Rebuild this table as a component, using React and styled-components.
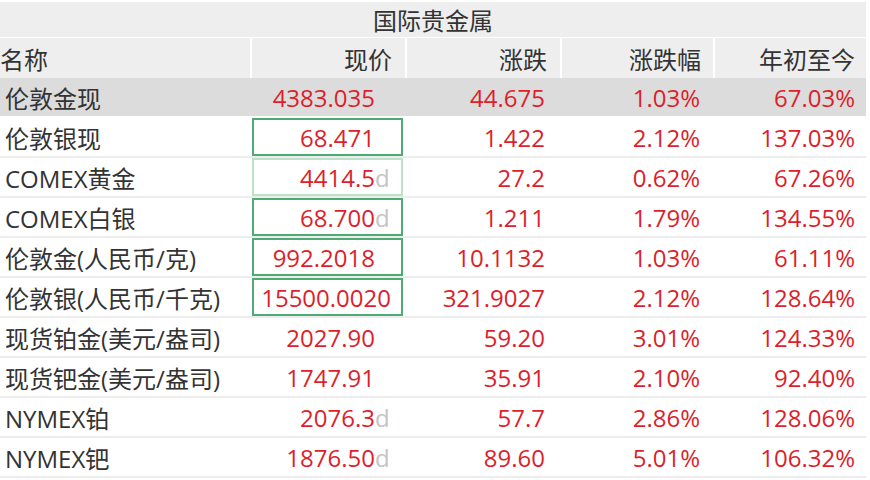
import React from "react";
import styled, { createGlobalStyle } from "styled-components";

const GlobalStyle = createGlobalStyle`
  html, body {
    margin: 0;
    padding: 0;
    background: #ffffff;
  }
  body {
    font-family: "Open Sans", "Noto Sans CJK SC", sans-serif;
  }
`;

const rows = [
  { name: "伦敦金现", price: "4383.035", chg: "44.675", pct: "1.03%", ytd: "67.03%", active: true },
  { name: "伦敦银现", price: "68.471", chg: "1.422", pct: "2.12%", ytd: "137.03%", box: "strong" },
  { name: "COMEX黄金", price: "4414.5", d: true, chg: "27.2", pct: "0.62%", ytd: "67.26%", box: "faint" },
  { name: "COMEX白银", price: "68.700", d: true, chg: "1.211", pct: "1.79%", ytd: "134.55%", box: "strong" },
  { name: "伦敦金(人民币/克)", price: "992.2018", chg: "10.1132", pct: "1.03%", ytd: "61.11%", box: "strong" },
  { name: "伦敦银(人民币/千克)", price: "15500.0020", chg: "321.9027", pct: "2.12%", ytd: "128.64%", box: "strong", wide: true },
  { name: "现货铂金(美元/盎司)", price: "2027.90", chg: "59.20", pct: "3.01%", ytd: "124.33%" },
  { name: "现货钯金(美元/盎司)", price: "1747.91", chg: "35.91", pct: "2.10%", ytd: "92.40%" },
  { name: "NYMEX铂", price: "2076.3", d: true, chg: "57.7", pct: "2.86%", ytd: "128.06%" },
  { name: "NYMEX钯", price: "1876.50", d: true, chg: "89.60", pct: "5.01%", ytd: "106.32%" },
];

const boxColors = {
  strong: "#4dab73",
  faint: "#bfe0cb",
};

const Table = styled.div`
  width: 866px;
  padding-top: 2px;
  font-size: 24px;
  color: #333333;
`;

const TitleBar = styled.div`
  height: 35px;
  background: #eeeeee;
  border-bottom: 1px solid #ffffff;
  display: flex;
  align-items: center;
  justify-content: center;
`;

const columns = "250px 155px 155px 153px 153px";

const HeaderRow = styled.div`
  display: grid;
  grid-template-columns: ${columns};
  height: 40px;
  background: #eeeeee;
`;

const HeadCell = styled.div`
  display: flex;
  align-items: center;
  justify-content: ${(p) => (p.$left ? "flex-start" : "flex-end")};
  padding-right: ${(p) => (p.$left ? "0" : `${p.$pr}px`)};
  border-left: ${(p) => (p.$left ? "none" : "2px solid #ffffff")};
`;

const Row = styled.div`
  display: grid;
  grid-template-columns: ${columns};
  height: 38px;
  background: ${(p) => (p.$active ? "#dcdcdc" : "#ffffff")};
  border-bottom: 2px solid ${(p) => (p.$active ? "#ffffff" : "#ececec")};
`;

const NameCell = styled.div`
  display: flex;
  align-items: center;
  padding-left: 5px;
  white-space: nowrap;
  color: #333333;
`;

const NumCell = styled.div`
  display: flex;
  align-items: center;
  justify-content: flex-end;
  padding-right: ${(p) => p.$pr}px;
  color: #dc1f2b;
  white-space: nowrap;
`;

const PriceCell = styled.div`
  padding: 0 2px;
  display: flex;
`;

const PriceBox = styled.div`
  flex: 1;
  box-sizing: border-box;
  border: 2px solid ${(p) => boxColors[p.$box] || "transparent"};
  display: flex;
  align-items: center;
  justify-content: flex-end;
  padding-right: ${(p) => (p.$wide ? "10px" : "9px")};
  color: #dc1f2b;
  white-space: nowrap;
`;

const DelaySlot = styled.span`
  display: inline-block;
  width: 17px;
  color: #c4c4c4;
  text-align: left;
`;

export default function App() {
  return (
    <>
      <GlobalStyle />
      <Table>
        <TitleBar>国际贵金属</TitleBar>
        <HeaderRow>
          <HeadCell $left>名称</HeadCell>
          <HeadCell $pr={13}>现价</HeadCell>
          <HeadCell $pr={13}>涨跌</HeadCell>
          <HeadCell $pr={12}>涨跌幅</HeadCell>
          <HeadCell $pr={11}>年初至今</HeadCell>
        </HeaderRow>
        {rows.map((r) => (
          <Row key={r.name} $active={r.active}>
            <NameCell>{r.name}</NameCell>
            <PriceCell>
              <PriceBox $box={r.box} $wide={r.wide}>
                {r.price}
                {!r.wide && <DelaySlot>{r.d ? "d" : ""}</DelaySlot>}
              </PriceBox>
            </PriceCell>
            <NumCell $pr={15}>{r.chg}</NumCell>
            <NumCell $pr={13}>{r.pct}</NumCell>
            <NumCell $pr={11}>{r.ytd}</NumCell>
          </Row>
        ))}
      </Table>
    </>
  );
}
